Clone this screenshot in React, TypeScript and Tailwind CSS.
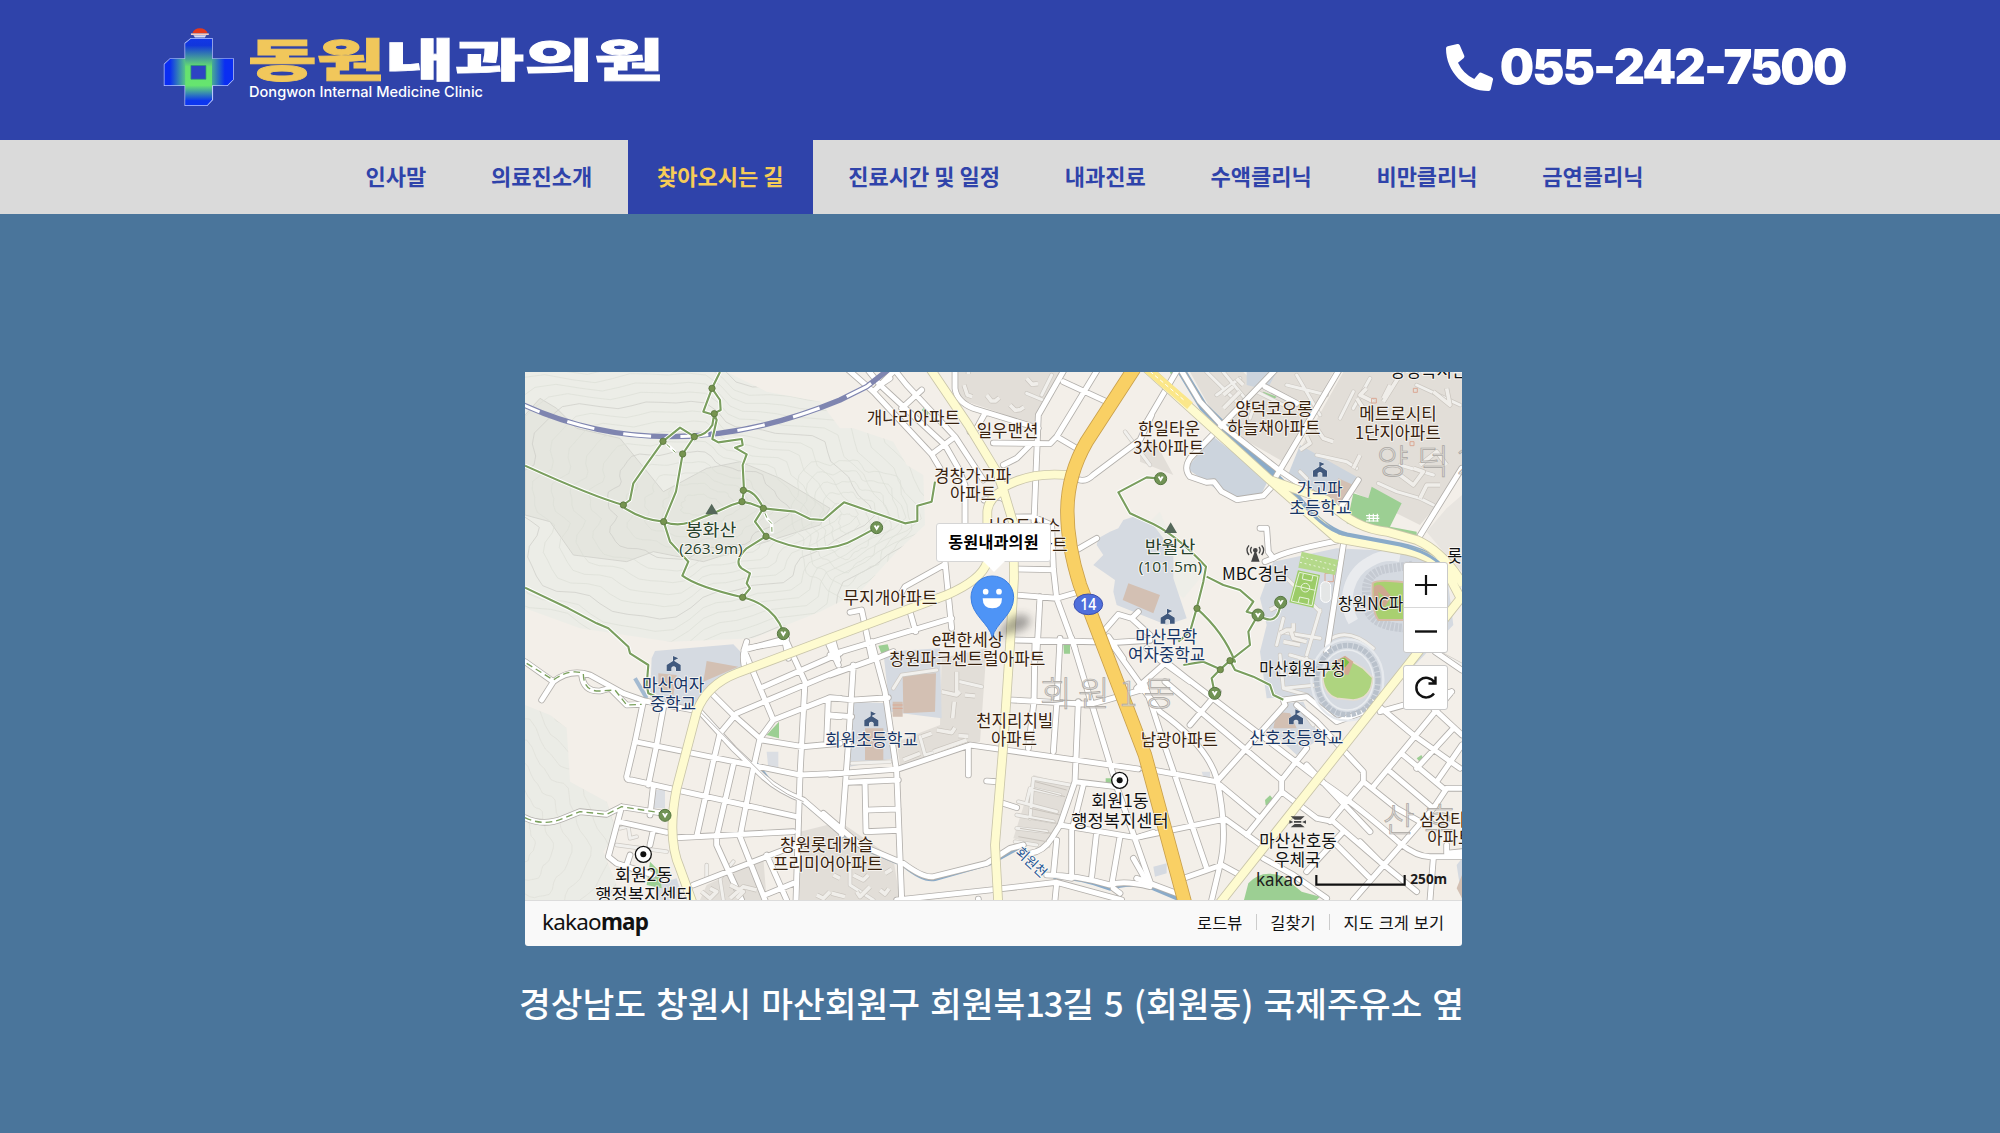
import React from "react";
import { FaPhoneAlt } from "react-icons/fa";

// Map sheets: every sheet has its own origin on the map's drawing grid.
const SHEETS = {
  A: [0, 0],
  B: [930, 0],
  C: [1860, 0],
  D: [0, 840],
  E: [930, 840],
  F: [1860, 840],
} as const;
type Sheet = keyof typeof SHEETS;
const at = (s: Sheet) => `translate(${SHEETS[s][0]} ${SHEETS[s][1]})`;

const streets: Record<Sheet, string> = {
  A: "M805 880 L795 830 L680 850 Q665 855 672 900 M925 835 L945 880",
  B: `M50 10 L130 80 L305 268 L330 310 M190 10 L230 60 L375 215 L460 345 M130 80 L190 20 M110 10 L150 60 L345 240 L385 310 L405 360 L405 475
    M215 130 L275 75 M305 268 L375 215 M150 60 L180 40 M375 10 L375 70 Q380 110 430 130 L625 190 M462 150 L440 190 L420 200
    M705 10 L625 150 L612 470 M805 10 L680 215 L660 236 L490 234 M700 50 L830 110 M680 215 L740 250 M600 240 L560 280 L520 300
    M555 456 L610 455 L665 480 L670 610 L680 700 M750 345 Q770 350 790 330 L930 225 L965 150 M800 520 L745 552
    M560 612 L670 614 M555 690 L680 700 L750 680 M680 700 L735 850 M630 695 L620 880 M550 825 L860 832 L960 826
    M215 682 L225 665 L345 598 M345 590 L365 790 M60 742 L95 735 L125 880 M240 740 L257 800 M0 870 L365 760 M820 800 L865 748 L905 760 L960 810 M905 760 L925 740
    M835 815 L880 880 M462 405 L510 395 L530 410`,
  C: `M115 10 L15 180 M120 10 L180 110 L245 180 L410 310 L600 440 M410 10 L150 280 Q130 310 150 335 L200 352 L222 350 L245 380 L290 404 L370 392 L400 360
    M600 10 L405 340 M375 65 L470 115 M655 345 L600 430 M965 310 L835 520 M360 490 L380 490 L385 560 L400 580 M375 590 L400 580 Q430 560 590 528 M610 540 L560 860`,
  D: `M15 50 L100 110 L65 165 M100 110 Q150 70 210 90 L310 145 L375 168 L520 195 M185 90 Q190 140 240 138 L270 130 L320 180 L365 178
    M370 170 L345 290 L320 395 Q320 405 335 405 L830 515 M430 190 L410 300 L385 420 M345 290 L840 390 L960 385 M400 425 L390 510
    M15 518 Q70 545 130 520 L180 500 L260 508 L305 485 L430 505 M305 485 L285 560 L265 635 L290 655 L400 690 M295 530 L440 562 M400 555 L390 600 M330 630 L320 660
    M680 -10 L672 15 L760 225 L720 280 L700 370 L660 575 L735 765 M672 15 L800 -20 M800 -10 L855 110 L840 390 L828 765
    M720 130 L960 25 M540 200 L640 310 L730 395 Q780 440 850 465 L960 560 M580 150 L640 210 L725 285 L850 305 L960 295 M600 265 L650 205 L960 75
    M600 265 L580 350 L530 575 M640 360 L590 575 L590 600 L665 765 M470 578 L820 560 M760 225 L925 160 L960 160 M925 160 L920 290 M925 212 L960 215
    M520 720 L830 600 M735 750 L820 715 M740 630 L800 765 M925 -10 L955 60`,
  E: `M10 -10 L25 45 M0 90 L140 40 L190 20 M125 -10 L165 140 L200 380 L215 765 M70 60 L55 300 L35 570 M0 158 L70 165 L175 158 M0 210 L65 215
    M0 388 L205 372 L420 300 L925 372 M415 305 L415 390 M55 412 L205 405 M105 415 L108 560 M115 495 L205 492 M108 560 L205 556
    M-20 505 L90 600 L220 655 Q280 700 310 695 L470 655 L540 610 L580 600 M470 408 L500 410 M520 475 L560 488
    M545 165 L780 178 L830 165 L950 130 M615 -10 L612 170 L595 310 M690 -20 L680 180 L670 320 M745 170 L735 410 M725 -20 L850 390
    M735 410 L860 425 L960 710 M735 410 L690 540 L665 580 Q640 620 600 625 M690 540 L920 578 L970 562 M760 420 L730 540 M680 585 L670 690 L725 700
    M725 555 L725 690 M800 560 L785 695 M870 575 L845 720 M650 690 Q740 690 840 720 Q880 705 960 725 M200 765 L480 735 L680 712 L875 765 M680 715 L675 765 M850 730 L870 745
    M840 -10 L940 130 L975 180 M445 762 L445 780`,
  F: `M-10 130 L75 55 M75 55 L20 10 M75 110 L425 405 L425 440 L320 570 M65 40 L140 100 L545 410 Q650 480 780 595 Q830 635 870 635 L966 635
    M0 120 L60 200 Q200 300 230 400 Q265 560 240 660 L215 765 M10 370 L230 410 L435 180 M15 120 L70 290 L200 670 M150 240 L235 140
    M60 45 L150 110 M425 440 L530 520 L580 530 L720 650 L830 740 M425 405 L500 310 M240 420 L360 520 M0 575 L255 522 L370 605 M130 700 L245 660 L300 690 M-20 640 L20 710
    M435 180 L430 165 L500 155 L590 230 L700 190 M470 180 L530 230 L670 380 L670 410 L570 530 M700 170 L820 270 L960 370
    M720 200 L935 140 M885 20 L965 75 M880 190 L966 270 M670 410 L770 490 L840 530 M880 490 L920 430 L966 430 M700 425 L935 140
    M790 330 L910 430 M750 380 L880 490 L640 765 M940 250 L830 370 M966 300 L890 410 M880 640 L870 765 M590 600 L690 700 M690 560 L500 360
    M610 560 L500 680 M730 660 L660 590 M-10 700 L110 745 M920 600 L920 625 L966 620 M370 640 L460 690 L560 760`,
};

const lanes: Record<Sheet, string> = {
  A: "",
  B: "M590 85 L650 110 M665 30 L635 90 M885 200 L960 300",
  C: `M200 21 L290 110 M250 21 L340 130 L330 160 M230 90 L300 40 M440 60 L560 90 M470 30 L540 150 M350 80 L430 120 M530 270 L620 290 L650 310 M600 160 L640 80
    M500 340 L480 320 M715 355 L770 380 L840 400 L880 420 M780 300 L880 330 M690 40 L640 130 M830 60 L960 120 M420 800 L540 820 M430 760 L410 840 M540 735 L500 870 M440 640 L540 740
    M560 830 Q620 780 700 850`,
  D: "M300 550 L340 540 M325 545 L330 580 L350 575 M290 600 L440 620 M610 765 L600 700 L640 650 M560 660 L560 700",
  E: `M190 130 L215 90 L320 75 M390 110 L455 125 M610 400 L720 420 M600 430 L690 450 M600 430 L590 470 M565 470 L680 500 M560 510 L670 530 M560 550 L650 560
    M555 590 L620 600 M610 400 L600 520 M65 355 L180 350 M60 640 L60 720 L130 765 M270 275 L285 330 L410 295`,
  F: "M420 30 L430 130 L500 150 M430 130 L530 120 M450 30 L520 50 M490 200 L520 240 M450 90 L500 40 M890 20 L965 60",
};

const yellowRoads = `M1230 10 L1345 180 L1430 320 L1450 375 L1480 475 L1482 640 L1470 840 L1450 1140 L1425 1440 L1435 1620
  M1402 590 L1402 440 Q1405 400 1450 375 M1402 590 Q1385 645 1280 690 L930 820 L650 925 Q560 960 530 1040 L470 1270 Q440 1420 480 1510 L520 1620 M1445 370 Q1530 318 1650 331
  M1880 10 L2250 345 L2450 520 L2660 557 Q2730 570 2780 620 L2822 700 L2095 1620 M2250 345 L2420 405 Q2500 490 2600 500 L2690 525 Q2770 560 2830 660`;

const trails = `M600 21 L576 70 L600 105 L602 135 L583 145 L577 180 Q560 210 523 215 L480 188 L429 229 L375 305 L340 355 L330 405 L310 420 Q220 395 15 302
  M576 70 L550 140 L583 150 L590 165 L577 222 L595 232 L665 222 L668 240 L645 248 L680 268 L668 300 L672 376 Q705 376 730 430 L825 440 L870 462 L910 465 L950 430 L972 412 L1155 475 L1192 468 L1192 422 L1235 410 L1245 350
  M523 215 L488 267 L468 380 L431 470 Q370 465 315 430 L310 420 M431 470 Q470 485 510 472 L590 440 L635 420 L666 410 L690 415 L730 430 L705 470 L738 514 Q800 545 880 553 Q960 550 1010 520 L1070 488
  M672 376 L666 410 M431 470 L450 530 L505 590 L487 632 Q530 665 668 697 Q760 720 790 800 M738 514 L680 550 Q640 590 665 610 L690 625 L680 655 L690 670 L668 697
  M15 668 L145 730 L230 775 L265 790 L325 845 L330 865 L385 900 L380 960 L385 985 L420 1000
  M1920 341 L1880 337 L1795 382 L1830 445 L1880 468 Q1960 500 2058 605 L2050 650 L2030 730 L2010 800 L1975 830 M2060 635 L2110 660 L2160 675 L2200 710 L2180 740 L2214 750 Q2275 790 2282 712
  M2030 730 Q2110 800 2145 890 L2130 887 M2214 750 L2185 800 L2190 840 L2130 887 L2101 913 L2075 940 L2084 985 M2130 887 L2145 915 L2200 935 L2250 960 L2260 990 L2290 1004 M1990 900 L2050 890 L2101 913`;

const trailDots: [number, number][] = [
  [576, 70], [583, 146], [523, 215], [429, 229], [488, 267], [310, 420], [431, 470], [670, 376], [666, 410],
  [730, 430], [738, 514], [668, 697], [2031, 730], [2130, 887], [2101, 914],
];
const trailHeads: [number, number][] = [[790, 806], [1070, 488], [1922, 341], [2282, 712], [2214, 750], [2084, 985], [435, 1351]];

const schools: [number, number][] = [[461, 898], [2400, 315], [1943, 756], [1054, 1064], [2328, 1058]];

const BROWN = "#38220e";
const NAVY = "#173566";
const BLACK = "#111111";
const PEAK = "#26412b";
const labels: [Sheet, number, number, number, string, string][] = [
  ["A", 497, 515, 152, "봉화산", PEAK],
  ["B", 110, 177, 280, "개나리아파트", BROWN],
  ["B", 440, 217, 185, "일우맨션", BROWN],
  ["B", 312, 351, 232, "경창가고파", BROWN],
  ["B", 360, 406, 138, "아파트", BROWN],
  ["B", 468, 502, 224, "서우드심스", BROWN],
  ["B", 575, 559, 138, "아파트", BROWN],
  ["B", 40, 717, 282, "무지개아파트", BROWN],
  ["B", 305, 844, 215, "e편한세상", BROWN],
  ["E", 178, 60, 468, "창원파크센트럴아파트", BROWN],
  ["C", -6, 210, 186, "한일타운", BROWN],
  ["C", -20, 268, 212, "3차아파트", BROWN],
  ["C", 286, 152, 232, "양덕코오롱", BROWN],
  ["C", 262, 208, 280, "하늘채아파트", BROWN],
  ["C", 658, 166, 232, "메트로시티", BROWN],
  ["C", 645, 223, 257, "1단지아파트", BROWN],
  ["C", 750, 38, 232, "양성복지관", BLACK],
  ["C", 470, 392, 138, "가고파", NAVY],
  ["C", 448, 449, 187, "초등학교", NAVY],
  ["C", 14, 566, 152, "반월산", PEAK],
  ["C", 246, 646, 200, "MBC경남", BLACK],
  ["C", 922, 593, 90, "롯데", BLACK],
  ["C", 594, 735, 240, "창원NC파크", BLACK],
  ["C", -14, 834, 186, "마산무학", NAVY],
  ["F", -36, 50, 232, "여자중학교", NAVY],
  ["D", 366, 138, 187, "마산여자", NAVY],
  ["D", 390, 197, 138, "중학교", NAVY],
  ["E", -14, 304, 278, "회원초등학교", NAVY],
  ["E", 438, 246, 232, "천지리치빌", BROWN],
  ["E", 483, 302, 138, "아파트", BROWN],
  ["E", 784, 487, 172, "회원1동", BLACK],
  ["E", 724, 548, 292, "행정복지센터", BLACK],
  ["F", 2, 305, 232, "남광아파트", BROWN],
  ["F", 328, 298, 282, "산호초등학교", NAVY],
  ["F", 358, 91, 258, "마산회원구청", BLACK],
  ["F", 358, 607, 232, "마산산호동", BLACK],
  ["F", 403, 664, 138, "우체국", BLACK],
  ["F", 838, 544, 186, "삼성타운", BROWN],
  ["F", 862, 599, 138, "아파트", BROWN],
  ["D", 285, 709, 172, "회원2동", BLACK],
  ["D", 226, 768, 292, "행정복지센터", BLACK],
  ["D", 780, 619, 280, "창원롯데캐슬", BROWN],
  ["D", 758, 676, 330, "프리미어아파트", BROWN],
];

// Closed, slightly irregular contour line.
function contour(cx: number, cy: number, rx: number, ry: number, seed: number) {
  let d = "";
  for (let i = 0; i <= 72; i++) {
    const a = (i / 72) * Math.PI * 2;
    const k = 1 + 0.1 * Math.sin(3 * a + seed) + 0.06 * Math.sin(8 * a + seed * 0.4) + 0.025 * Math.sin(17 * a);
    d += `${i ? "L" : "M"}${(cx + Math.cos(a) * rx * k).toFixed(0)} ${(cy + Math.sin(a) * ry * k).toFixed(0)}`;
  }
  return d;
}

function Blocks({ d }: { d: string }) {
  return (
    <>
      <path d={d} fill="none" stroke="#c9c4bd" strokeWidth={15} />
      <path d={d} fill="none" stroke="#f0eeea" strokeWidth={11} />
    </>
  );
}

const HILL = "M15 21 H620 L740 80 L900 110 L960 190 L1000 190 L1120 230 L1160 300 L1210 330 L1215 480 L1130 560 L1020 680 L900 740 L700 820 L450 830 L180 790 L15 730Z";
const HILL_WEST = "M15 1020 L90 1050 L140 1090 L150 1250 L260 1310 L290 1400 L250 1460 L290 1560 L320 1605 H15Z";
const HIGHWAY = "M1843 10 L1700 230 Q1642 330 1642 440 Q1642 540 1680 660 L1745 830 L1875 1170 L1998 1625";
const RAILWAY = "M0 115 Q440 320 960 105 L1040 65 L1110 10";

function ClinicMap() {
  const keys = Object.keys(SHEETS) as Sheet[];
  return (
    <svg viewBox="15 21 2811 1584" className="block h-[528px] w-[937px]" preserveAspectRatio="none" fontFamily="'Noto Sans CJK KR', sans-serif">
      <defs>
        <clipPath id="hill"><path d={HILL} /></clipPath>
        <clipPath id="hill2"><path d={HILL_WEST} /></clipPath>
        <filter id="soft" x="-50%" y="-100%" width="200%" height="300%"><feGaussianBlur stdDeviation="13" /></filter>
      </defs>
      <rect x="0" y="0" width="2850" height="1640" fill="#f3efe9" />

      {/* hills */}
      <path d={HILL} fill="#ecede7" />
      <path d="M15 150 L60 100 L110 130 L170 190 L300 220 L430 380 L560 310 L660 290 L780 340 L930 430 L900 480 L740 530 L550 590 L400 560 L320 590 L160 570 L90 470 L15 450Z" fill="#e5e6df" stroke="#cdcec8" strokeWidth="2.2" />
      <path d={HILL_WEST} fill="#ebece6" />
      <path d="M1880 480 L1920 440 L1960 540 L2020 560 L2040 640 L1990 700 L1930 640Z" fill="#eeeee8" />
      <g clipPath="url(#hill)" fill="none" strokeWidth="2.2">
        {Array.from({ length: 15 }, (_, i) => (
          <path key={i} d={contour(540 - i * 8, 420, 60 + i * 50, 30 + i * 31, 1 + i * 0.09)} stroke={i % 5 === 4 ? "#cdcec8" : "#dddfd7"} />
        ))}
        {Array.from({ length: 6 }, (_, i) => (
          <path key={"e" + i} d={contour(985, 475, 30 + i * 28, 28 + i * 34, 2 + i * 0.1)} stroke="#dddfd7" />
        ))}
      </g>
      <g clipPath="url(#hill2)" fill="none" stroke="#dfdfd8" strokeWidth="2.2">
        {Array.from({ length: 7 }, (_, i) => (
          <path key={i} d={contour(-20, 1420, 60 + i * 48, 80 + i * 62, i * 0.2)} />
        ))}
      </g>

      {/* apartment complexes */}
      <g fill="#e2ded8">
        <path d="M1305 21 H1640 L1555 150 L1540 180 L1400 130 L1310 100Z M2010 21 H2170 L2240 90 L2110 200Z M2240 21 H2440 L2290 290 L2110 190Z M2470 21 H2826 V330 L2700 480 L2440 350 L2330 270Z M1860 260 L1900 220 L1960 330 L1860 290Z" />
        <path d="M1265 880 L1400 850 L1380 1130 L1140 1200 L1130 1130 L1260 1080Z M1540 1230 L1650 1260 L1590 1450 L1480 1420Z M840 1400 L960 1370 L1120 1480 L1140 1605 H840Z M560 1560 L730 1480 L740 1605 H540Z" />
        <path d="M2826 390 L2780 430 L2720 500 L2770 560 L2826 620Z" fill="#e8e5e0" />
      </g>
      {/* public grounds */}
      <g fill="#d5dae1">
        <path d="M405 858 L640 838 L700 900 L580 950 L530 1030 L390 1000 L395 880Z M1090 860 L1260 850 L1265 1060 L1110 1040Z M1000 1010 L1105 1015 L1120 1180 L990 1205Z" />
        <path d="M1770 500 L1795 490 L1810 465 L1840 455 L1900 480 L1960 560 L1960 640 L2000 760 L1940 780 L1790 720 L1780 680 L1785 645 L1720 600 L1750 570 L1730 540 L1735 520Z" />
        <path d="M2000 310 L2080 215 L2245 345 L2225 385 L2150 405 L2100 380Z M2340 240 L2510 335 L2450 440 L2300 340Z M2180 21 H2270 L2240 75 L2180 60Z" fill="#ccd4dd" />
        <path d="M2260 590 L2450 550 L2660 560 L2780 620 L2800 780 L2560 1030 L2450 1080 L2370 990 L2240 1000 L2220 860 L2240 780 L2220 700Z" />
        <path d="M2290 1015 L2350 1010 L2400 1120 L2330 1170 L2235 1080Z M400 1560 L470 1540 L490 1605 H420Z M1900 1505 L1940 1495 V1525 L1905 1535Z M2810 1500 L2826 1480 V1605Z" />
        <path d="M1870 1170 l25 -8 v20 l-20 8z M2045 1220 l25 0 v16 h-20z M395 1275 h40 v55 h-40z M740 1160 h35 v50 h-30z M2560 1250 l14-10 6 12z" opacity=".8" />
      </g>
      <g fill="#d3c0b3">
        <path d="M560 888 L655 905 L550 950Z M415 925 L470 930 L460 990 L415 970Z M1148 930 L1248 925 L1245 1040 L1150 1045Z M1118 1010 h30 v45 h-30z M1035 1090 L1090 1090 L1090 1185 L1035 1185Z" />
        <path d="M1825 655 L1920 690 L1900 745 L1808 705Z M2270 1040 L2310 1045 L2330 1090 L2260 1090Z M2455 340 L2500 360 L2460 420 L2420 390Z M2826 1530 V1600 L2810 1570Z" />
      </g>
      <g fill="#9ccf93">
        <path d="M1205 135 l15-15 12 12-10 20z M1075 842 l28-4 8 26 -26 4z M1630 838 h20 v28 h-18z M2500 385 L2545 400 L2555 365 L2645 415 L2610 485 L2690 500 L2690 522 L2480 475Z M740 1110 L777 1070 V1120Z M390 1490 L420 1520 L425 1570 L380 1560Z M2172 1605 L2185 1555 Q2225 1510 2290 1535 L2345 1580 L2400 1595 L2390 1605Z M2235 1305 l15 -14 10 12 -8 18 -15 0z M2690 1180 l14 -10 8 14 -8 12z M1757 1240 h22 v22 h-22z M2230 80 l40 15 -8 8 -35-14z M1950 21 L1975 21 L1960 50Z" />
      </g>
      <path d="M2538 452 h38 m-36 8 h38 m-40 8 h38 m-28 -22 v24 m12 -24 v24 m12 -24 v24" stroke="#fff" strokeWidth="3.5" fill="none" />

      {/* water */}
      <g fill="none" stroke="#8aabc9">
        <path d="M1980 10 L2050 125 L2260 330 L2330 400 Q2410 500 2480 515 L2640 545 Q2730 565 2765 605" strokeWidth="26" />
        <path d="M700 1185 L750 1250 L850 1310 L960 1400 L1020 1445 L1150 1500 Q1210 1550 1245 1542 L1410 1495 L1510 1440" strokeWidth="12" />
        <path d="M1600 1535 Q1680 1535 1770 1570 Q1820 1550 1890 1565 L1985 1605" strokeWidth="14" />
        <path d="M345 940 L380 1000" strokeWidth="12" stroke="#a3bad1" />
      </g>

      {/* streets */}
      <g fill="none" strokeLinejoin="round" strokeLinecap="round">
        {keys.map((k) => <path key={k} transform={at(k)} d={lanes[k]} stroke="#cdc9c3" strokeWidth={13} />)}
        {keys.map((k) => <path key={k + "i"} transform={at(k)} d={lanes[k]} stroke="#f1f0ed" strokeWidth={9} />)}
        {keys.map((k) => <path key={k + "c"} transform={at(k)} d={streets[k]} stroke="#b3b0ac" strokeWidth={20} />)}
        {keys.map((k) => <path key={k + "f"} transform={at(k)} d={streets[k]} stroke="#ffffff" strokeWidth={15} />)}
        <path d="M540 1040 L690 1190 L760 1260 Q800 1290 850 1310" stroke="#a9a6a2" strokeWidth="2.5" />
        <path d="M20 895 L100 945 Q150 910 190 925 Q190 980 240 978 L285 975 L320 1020 L365 1018 M15 1358 Q70 1385 130 1360 L180 1340 L260 1348 L305 1325 L430 1345" stroke="#7aa05c" strokeWidth="4" strokeDasharray="20 12" strokeLinecap="butt" />
      </g>

      {/* small buildings */}
      <g strokeLinejoin="round">
        <Blocks d="M1332 60 l10 30 15 5 M1400 90 l14 18 12 0 12 -10 M1470 120 l16 16 14 -2 12 -8 M1520 40 l16 18 18 -2 M1345 21 l0 6" />
        <Blocks d="M2340 255 l30 -20 -10 -20 M2390 190 l20 30 30 10 M2510 100 l20 30 M2560 110 l-40 -20 20 -20 M2640 30 l-50 80 M2740 80 l50 40 -10 -50 M2640 330 l40 30 30 -40 -30 -10 M2700 300 l50 -40 30 40 M2700 400 l20 -40 40 0 M2520 270 l-20 40 M2610 60 l-20 40 M2150 40 l20 20 M2110 90 l30 -25 M2110 130 l50 -50" />
        <Blocks d="M1310 920 l0 70 -45 -10 M1310 990 l10 -10 M1335 990 l30 3 M1303 1010 l-5 50 M1205 1115 l30 -10 M1240 1160 l100 -35 M1250 1095 l45 8 10 -15 M1150 1185 l50 -20 M1315 1112 l30 2" />
        <Blocks d="M545 1580 l25 20 20 -20 -20 -10 M630 1560 l40 20 -20 20 M630 1600 l40 -35 40 10 M890 1590 l20 10 20 -20 M935 1585 l40 10 M1010 1580 l10 15 30 -30 M1080 1575 l15 12 12 -16 M1000 1530 l30 15 15 -15 M940 1530 l20 10 M1095 1525 l20 -12" />
        <Blocks d="M2280 805 l20 -10 20 0 0 -20 M2250 735 l20 -10 10 8 M2310 790 l10 30 40 10 M2290 830 l50 10" />
        <g fill="none" stroke="#c9c4bd" strokeWidth="3"><path d="M1545 1250 L1640 1275 M1540 1270 L1635 1295 M1530 1330 L1620 1350 M1525 1360 L1610 1375 M1500 1390 L1595 1405 M1495 1415 L1580 1430" /></g>
        <g fill="none" stroke="#dba893" strokeWidth="3"><path d="M2555 100 h14 v14 h-14z M2680 70 h12 v12 h-12z M2670 230 h12 v12 h-12z M1118 1020 h30 M1118 1030 h30 M2415 625 h25 v25 h-25z" /></g>
      </g>

      {/* sports park */}
      <path d="M2345 560 L2455 585 L2445 630 L2335 608Z" fill="#b4d98a" />
      <path d="M2334 616 L2400 630 L2380 728 L2308 712Z" fill="#9ccc68" />
      <path d="M2345 576 L2450 602 M2340 592 L2446 618" stroke="#eaf4dc" strokeWidth="3" strokeDasharray="6 8" />
      <g fill="none" stroke="#e8f3dc" strokeWidth="3"><path d="M2338 622 L2394 634 L2376 722 L2314 708Z M2325 662 L2386 676" /><circle cx="2356" cy="668" r="13" /><path d="M2350 626 l-3 16 28 6 4 -17 M2335 712 l4 -16 28 6 -3 16" /></g>
      <rect x="2402" y="650" width="30" height="62" rx="14" fill="#e4e6e6" stroke="#fff" strokeWidth="3" />
      <path d="M2500 770 A130 130 0 0 1 2550 590 Q2590 565 2640 575" fill="none" stroke="#e9ebee" strokeWidth="32" />
      <path d="M2540 690 Q2530 620 2610 610 L2680 600 M2545 740 Q2570 790 2680 790" fill="none" stroke="#c5cad2" strokeWidth="26" strokeDasharray="9 3" />
      <path d="M2558 655 Q2570 640 2680 655 V765 H2575 Q2555 740 2558 655Z" fill="#a9d070" stroke="#d8bba8" strokeWidth="6" />
      <path d="M2562 665 q14 -12 28 0 l24 30 -18 28 q-26 8 -34 -16z" fill="#cfa890" /><path d="M2575 680 l18 16 -14 16z" fill="#a9d070" />
      <g fill="none" stroke="#b9c1cb"><ellipse cx="2482" cy="945" rx="92" ry="104" strokeWidth="16" strokeDasharray="13 3" /><ellipse cx="2482" cy="945" rx="78" ry="90" strokeWidth="5" stroke="#e9ecef" /><ellipse cx="2482" cy="945" rx="108" ry="122" strokeWidth="7" stroke="#e6e9ed" /></g>
      <path d="M2408 935 L2440 895 L2478 878 L2530 910 L2558 938 Q2555 1000 2500 1005 L2450 1000 Q2410 985 2408 935Z" fill="#aed47f" stroke="#e6ddcf" strokeWidth="5" />
      <path d="M2442 890 L2475 872 L2500 890 L2485 930 L2450 925Z" fill="#d3ab93" /><path d="M2460 882 l14 -4 14 14 -14 16z" fill="#7cc24c" />

      {/* railway */}
      <path d={RAILWAY} fill="none" stroke="#7f85b0" strokeWidth="16" />
      <path d={RAILWAY} fill="none" stroke="#fff" strokeWidth="9" strokeDasharray="84 88" strokeDashoffset="20" />

      {/* main roads */}
      <g fill="none" strokeLinejoin="round">
        <path d={yellowRoads} stroke="#c9c5aa" strokeWidth="29" />
        <path d={yellowRoads} stroke="#fefbd0" strokeWidth="24" />
        <path d="M1880 10 L2010 122" stroke="#fbe78a" strokeWidth="26" />
        <path d="M1890 19 L1995 108" stroke="#fff" strokeWidth="3" strokeDasharray="12 8" />
        <path d="M2335 400 Q2410 496 2480 510 L2640 540 Q2730 562 2765 602" stroke="#8aabc9" strokeWidth="9" />
        <path d={HIGHWAY} stroke="#c9a04c" strokeWidth="43" />
        <path d={HIGHWAY} stroke="#f9d064" strokeWidth="38" />
      </g>

      {/* trails */}
      <g fill="none" strokeLinejoin="round">
        <path d={trails} stroke="#fff" strokeWidth="12" />
        <path d={trails} stroke="#7a9e5e" strokeWidth="6.4" />
        <path d="M440 238 L466 262 M735 445 L742 462 L755 475 L756 505" stroke="#fff" strokeWidth="10" />
        <path d="M440 238 L466 262 M735 445 L742 462 L755 475 L756 505" stroke="#7a9e5e" strokeWidth="3" strokeDasharray="14 10" />
      </g>
      {trailDots.map(([x, y], i) => <circle key={i} cx={x} cy={y} r="9.5" fill="#76944f" stroke="#59753f" strokeWidth="2.5" />)}
      {trailHeads.map(([x, y], i) => (
        <g key={i} transform={`translate(${x} ${y})`}>
          <circle r="18" fill="#719355" stroke="#557640" strokeWidth="3" />
          <path d="M-9 -6 L-3 -7 L0 -2 L3 -7 L9 -6 L0 9Z" fill="#fff" />
        </g>
      ))}

      {/* points of interest */}
      <path d="M556 448 L575 416 L594 448Z M1933 504 L1952 472 L1971 504Z" fill="#55685a" />
      {schools.map(([x, y], i) => (
        <g key={i} transform={`translate(${x} ${y})`}>
          <path d="M-21 20 V2 L-2 -10 V-25 L14 -18 L2 -12 V-10 L21 2 V20 H7 V10 Q0 2 -7 10 V20Z" fill="#41597d" stroke="#f5f5f5" strokeWidth="2" paintOrder="stroke" />
        </g>
      ))}
      {[[370, 1468], [1799, 1246]].map(([x, y], i) => (
        <g key={i}><circle cx={x} cy={y} r="24" fill="#fff" stroke="#111" strokeWidth="4" /><circle cx={x} cy={y} r="9" fill="#111" /></g>
      ))}
      <g transform="translate(2206 560)" fill="none" stroke="#444" strokeWidth="4">
        <path d="M0 0 L-10 28 H10Z" fill="#444" /><circle r="5" cy="-4" fill="#444" />
        <path d="M-11 -14 Q-18 -5 -11 5 M11 -14 Q18 -5 11 5 M-19 -19 Q-31 -5 -19 10 M19 -19 Q31 -5 19 10" />
      </g>
      <path d="M2312 1354 H2354 L2342 1364 H2324Z M2312 1387 H2354 L2342 1377 H2324Z M2308 1366 L2320 1371 L2308 1376Z M2358 1366 L2346 1371 L2358 1376Z M2322 1368 H2344 V1373 H2322Z" fill="#444" />
      <ellipse cx="1705" cy="718" rx="43" ry="31" fill="#4f6fdb" stroke="#3c4fae" strokeWidth="3" />
      <text x="1705" y="735" fontSize="46" fontWeight="600" textAnchor="middle" fill="#fff" fontFamily="'Open Sans', sans-serif" textLength="48" lengthAdjust="spacingAndGlyphs">14</text>

      {/* district names */}
      <g fontSize="104" fontWeight="300" fill="#dcd9d4" fillOpacity=".7" stroke="#a9a6a2" strokeWidth="2.2">
        <text x="2570" y="326">양</text><text x="2692" y="326">덕</text><text x="2812" y="326">2</text>
        <text x="1560" y="1022">회</text><text x="1674" y="1022">원</text><text x="1796" y="1022">1</text><text x="1870" y="1022">동</text>
        <text x="2588" y="1400">산</text><text x="2712" y="1400">호</text>
      </g>

      {/* labels */}
      <g fontSize="52" stroke="#fbf9f5" strokeWidth="6" strokeOpacity=".85" strokeLinejoin="round" paintOrder="stroke" fontWeight="400">
        {labels.map(([s, x, y, w, t, c], i) => (
          <text key={i} transform={at(s)} x={x} y={y - 1} textLength={w} lengthAdjust="spacingAndGlyphs" fill={c}>{t}</text>
        ))}
        <g fill={PEAK} fontSize="45" fontFamily="'Open Sans', sans-serif">
          <text x="478" y="566" textLength="190" lengthAdjust="spacingAndGlyphs">(263.9m)</text>
          <text x="1856" y="621" textLength="190" lengthAdjust="spacingAndGlyphs">(101.5m)</text>
        </g>
        <text transform="translate(1484 1465) rotate(43)" fontSize="41" fill="#235594" textLength="110" lengthAdjust="spacingAndGlyphs">회원천</text>
      </g>

      {/* scale */}
      <text x="2208" y="1563" fontSize="52" fill="#1c1c1c" fontFamily="'Noto Sans', sans-serif" textLength="142" lengthAdjust="spacingAndGlyphs">kakao</text>
      <path d="M2389 1530 V1559 H2654 V1530" fill="none" stroke="#111" strokeWidth="6.5" />
      <text x="2671" y="1557" fontSize="40" fontWeight="700" fill="#1c1c1c" fontFamily="'Noto Sans', sans-serif" textLength="110" lengthAdjust="spacingAndGlyphs">250m</text>

      {/* marker */}
      <path d="M1425 815 L1470 760 Q1510 738 1530 762 Q1532 792 1480 803Z" fill="#333" opacity=".42" filter="url(#soft)" />
      <path d="M1417 818 C1408 775 1353 750 1353 697 A64 64 0 0 1 1481 697 C1481 750 1426 775 1417 818Z" fill="#4e94f6" stroke="#3c7fe0" strokeWidth="3" />
      <circle cx="1397" cy="680" r="8.5" fill="#fff" /><circle cx="1437" cy="680" r="8.5" fill="#fff" />
      <path d="M1388 700 H1446 Q1446 730 1417 730 Q1388 730 1388 700Z" fill="#fff" />
    </svg>
  );
}

function Logo() {
  return (
    <a className="flex items-start">
      <svg viewBox="60 50 210 245" preserveAspectRatio="none" className="mt-[26px] h-[82px] w-[75px]">
        <defs>
          <linearGradient id="v" x1="0" y1="0" x2="0" y2="1"><stop offset="0" stopColor="#1237e6" /><stop offset=".1" stopColor="#1136dc" /><stop offset=".42" stopColor="#66e06f" /><stop offset=".7" stopColor="#66e56f" /><stop offset=".93" stopColor="#0c36ee" /></linearGradient>
          <linearGradient id="h" x1="0" x2="1"><stop offset=".08" stopColor="#0a2df2" /><stop offset=".35" stopColor="#66e56f" /><stop offset=".62" stopColor="#5fdb72" /><stop offset=".88" stopColor="#0a2df2" /></linearGradient>
        </defs>
        <path d="M67 164 L83 148 H125 V102 L141 88 H200 V148 H259 V210 L243 227 H201 V270 L186 287 H125 V227 H67Z" fill="none" stroke="#b9c6ff" strokeWidth="4" />
        <path d="M67 164 L83 148 H259 V210 L243 227 H67Z" fill="url(#h)" />
        <path d="M125 102 L141 88 H200 V270 L186 287 H125Z" fill="url(#v)" />
        <path d="M141 168 H183 V209 H141Z" fill="#2d43c4" stroke="#2a9a6c" strokeWidth="2" />
        <path d="M145 72 Q150 57 166 57 Q182 57 188 72Z" fill="#e4391c" /><path d="M141 72 H191 V77 H141Z" fill="#f7cdbc" /><path d="M148 78 H184 L180 84 H152Z" fill="#d8dcf2" />
      </svg>
      <div className="ml-[12px] mt-[29px] flex flex-col">
        <svg viewBox="0 0 416 54" className="h-[54px] w-[416px] overflow-visible" fontFamily="'Noto Sans CJK KR', sans-serif" fontWeight="900">
          <g transform="translate(-2 47.5) scale(1 .88)" fontSize="52" strokeWidth="1">
            <text x="1" y="0" fill="#f1c75b" stroke="#f1c75b" textLength="137" lengthAdjust="spacingAndGlyphs">동원</text>
            <text x="138" y="0" fill="#fff" stroke="#fff" textLength="279" lengthAdjust="spacingAndGlyphs">내과의원</text>
          </g>
        </svg>
        <span className="-mt-[1px] whitespace-nowrap font-['Inter'] text-[14.6px] font-medium leading-5 text-white">Dongwon Internal Medicine Clinic</span>
      </div>
    </a>
  );
}

const menu = ["인사말", "의료진소개", "찾아오시는 길", "진료시간 및 일정", "내과진료", "수액클리닉", "비만클리닉", "금연클리닉"];

export default function App() {
  return (
    <div className="flex h-[1133px] w-[2000px] flex-col overflow-hidden bg-[#4a759b] font-['Noto_Sans_CJK_KR',sans-serif]">
      <header className="flex h-[140px] shrink-0 justify-between bg-[#2f43aa] pl-[162px] pr-[154.5px]">
        <Logo />
        <div className="flex h-[134px] items-center gap-[7px] text-white">
          <FaPhoneAlt className="size-[47px]" />
          <span className="whitespace-nowrap font-['Inter'] text-[48.5px] font-black leading-none tracking-[-1.9px]">055-242-7500</span>
        </div>
      </header>

      <nav className="flex h-[73.5px] shrink-0 gap-[6.4px] bg-[#dadada] pl-[336.4px]">
        {menu.map((m, i) => (
          <a key={m} className={`flex items-center whitespace-nowrap px-[29.2px] pb-[3.5px] text-[22px] font-bold ${i === 2 ? "bg-[#2f43aa] text-[#f6cb57]" : "text-[#2f43aa]"}`}>{m}</a>
        ))}
      </nav>

      <main className="flex flex-col pl-[525px] pt-[158.5px]">
        <section className="relative w-[937px] overflow-hidden rounded-b-[3px] bg-[#f9f9f9]">
          <ClinicMap />
          <div className="absolute left-[411px] top-[150.5px] flex h-[39px] w-[115px] items-center justify-center rounded-[3px] border border-[#d5d5d5] bg-white pb-[1px] text-[16.2px] font-bold tracking-[0.2px] text-black">
            동원내과의원
            <svg viewBox="0 0 22 11" className="absolute left-[46px] top-[37px] h-[11px] w-[22px]"><path d="M0 0 H22 L11 11Z" fill="#fff" /></svg>
          </div>
          <div className="absolute right-[14px] top-[190px] flex h-[91px] w-[45px] flex-col divide-y divide-[#d8d8d8] rounded-[3px] border border-[#c9c9c9] bg-white">
            <div className="flex flex-1 items-center justify-center"><svg viewBox="0 0 22 22" className="size-[22px]"><path d="M11 1 V21 M0 11 H22" stroke="#111" strokeWidth="2.2" /></svg></div>
            <div className="flex flex-1 items-center justify-center"><svg viewBox="0 0 22 22" className="size-[22px]"><path d="M0 12.5 H22" stroke="#111" strokeWidth="2.4" /></svg></div>
          </div>
          <div className="absolute right-[14px] top-[292.5px] flex h-[45px] w-[45px] items-center justify-center rounded-[3px] border border-[#c9c9c9] bg-white">
            <svg viewBox="0 0 24 24" className="size-[24px]" fill="none" stroke="#111" strokeWidth="2.4"><path d="M20 18.5 A9.8 9.8 0 1 1 20.5 7.5 M21.5 1.5 V8.5 H14.5" /></svg>
          </div>
          <footer className="flex h-[46px] items-center justify-between border-t border-[#dcdcdc] pb-[3px] pl-[17px] pr-[18px]">
            <span className="font-['Noto_Sans'] text-[22.5px] leading-none tracking-[-0.8px] text-[#111]">kakao<b>map</b></span>
            <div className="flex items-center text-[16.4px] leading-none text-[#111]">
              <span>로드뷰</span>
              <i className="mx-[13.5px] h-[16px] w-px bg-[#ccc]" />
              <span>길찾기</span>
              <i className="mx-[13.5px] h-[16px] w-px bg-[#ccc]" />
              <span className="[word-spacing:1.3px]">지도 크게 보기</span>
            </div>
          </footer>
        </section>
        <p className="-ml-[6px] mt-[31px] whitespace-nowrap text-[34.5px] font-medium leading-[50px] text-white [word-spacing:2.3px]">경상남도 창원시 마산회원구 회원북<span className="tracking-[-1.2px]">13</span>길 5 (회원동) 국제주유소 옆</p>
      </main>
    </div>
  );
}
